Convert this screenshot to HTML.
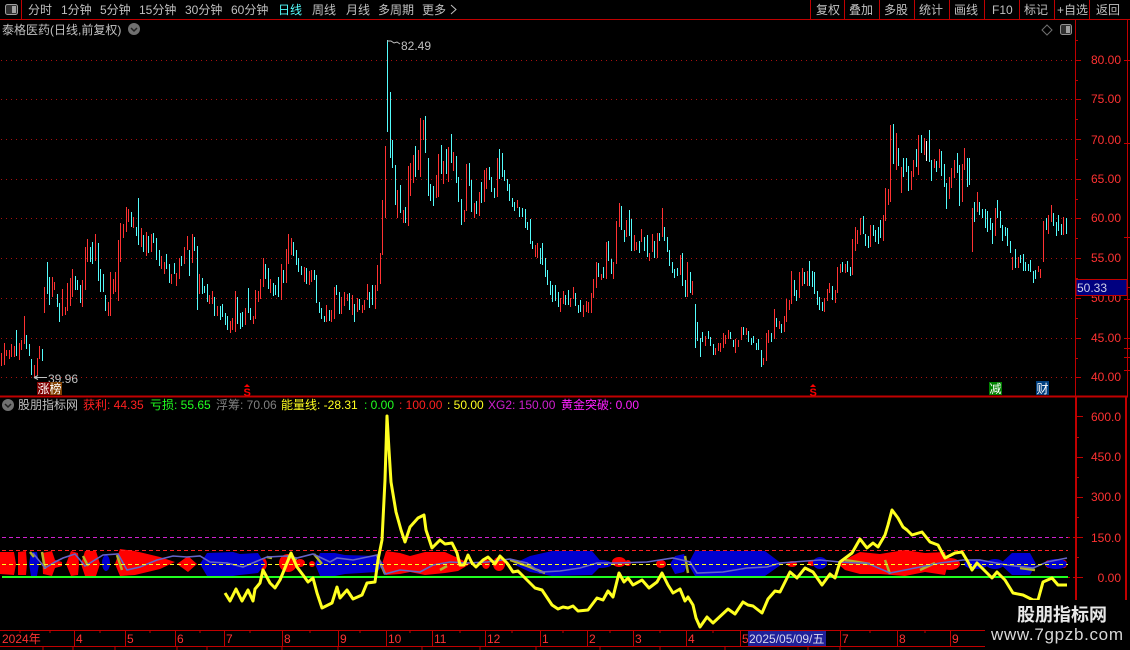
<!DOCTYPE html>
<html><head><meta charset="utf-8"><style>
html,body{margin:0;padding:0;background:#000;width:1130px;height:650px;overflow:hidden}
svg{display:block}
text{font-family:"Liberation Sans","WenQuanYi Zen Hei","Noto Sans CJK SC",sans-serif;font-size:12px;fill:#c0c0c0}
.r{fill:#ff3232}
.ax text{fill:#ff3232;text-anchor:end}
</style></head><body>
<svg width="1130" height="650" viewBox="0 0 1130 650" xmlns="http://www.w3.org/2000/svg">
<rect width="1130" height="650" fill="#000"/>
<!-- grid -->
<g stroke="#a81010" stroke-dasharray="1 4" shape-rendering="crispEdges">
<path d="M1 60.5H1075M1 99.5H1075M1 139.5H1075M1 179.5H1075M1 218.5H1075M1 258.5H1075M1 298.5H1075M1 338.5H1075M1 377.5H1075"/>
</g>
<!-- candles -->
<g transform="translate(.5,0)" fill="none" stroke-width="1" shape-rendering="crispEdges">
<path stroke="#ff3232" d="M1 353V366M4 343V365M6 350V356M9 350V359M11 344V357M14 346V357M19 343V360M21 340V350M24 316V344M34 365V378M37 358V375M39 346V359M44 287V313M52 277V297M54 282V290M62 289V316M65 307V315M67 283V311M70 278V306M72 269V297M82 280V307M85 247V290M87 239V262M95 234V261M108 302V316M110 272V316M113 279V294M115 272V292M118 240V301M120 223V262M123 224V238M126 207V232M128 209V222M133 217V228M141 228V247M146 232V256M151 234V252M161 256V269M164 262V274M171 274V284M176 273V286M179 258V279M184 247V264M187 236V250M192 234V263M199 274V294M209 295V304M212 291V304M217 306V316M230 321V333M232 318V330M235 291V332M245 308V325M253 316V324M255 290V319M258 291V302M260 279V299M263 258V287M270 279V293M281 264V300M286 249V283M288 234V264M291 238V255M304 267V282M309 271V285M311 270V282M326 305V322M331 310V322M334 287V319M341 297V314M344 292V306M347 294V301M352 295V315M357 298V312M362 305V313M364 300V310M367 284V300M375 285V309M377 265V291M380 253V284M382 200V255M385 146V218M397 190V218M403 210V223M408 166V226M410 163V196M413 155V183M418 150V170M420 118V177M423 120V140M436 175V198M438 154V197M443 161V184M448 147V182M453 152V171M464 210V222M466 164V211M474 203V218M479 192V216M484 170V202M486 168V189M497 158V197M517 200V208M535 245V257M537 243V258M560 298V312M563 291V304M570 298V307M573 287V299M583 305V317M586 301V312M588 302V313M591 293V313M593 279V298M596 262V288M601 274V280M606 242V279M613 262V279M616 221V264M619 203V227M626 220V237M634 235V251M636 242V250M641 229V242M649 253V261M652 234V252M657 233V258M662 208V237M680 255V275M687 262V297M692 281V295M705 336V346M715 348V355M718 343V351M720 343V352M723 333V348M725 335V344M728 330V339M735 339V353M738 340V347M741 327V340M746 328V335M763 358V365M766 333V361M768 330V343M774 309V339M779 321V329M784 316V332M786 299V322M789 300V310M791 271V304M799 272V298M802 268V286M807 271V286M824 298V312M827 289V301M829 283V293M835 290V303M837 267V293M840 264V273M845 264V273M852 239V275M855 227V251M857 230V244M860 218V235M870 225V247M883 215V241M885 188V221M888 189V205M890 125V202M896 133V170M901 167V193M911 171V190M913 160V177M918 135V175M924 138V155M934 159V168M939 149V168M949 177V199M951 168V188M954 160V178M962 164V202M964 148V170M972 208V252M977 192V212M995 208V236M1012 257V270M1018 257V268M1038 266V272M1040 269V278M1043 221V262M1048 215V234M1051 205V222M1063 217V235"/>
<path stroke="#54fcfc" d="M16 330V356M26 335V349M29 344V356M31 359V375M42 349V361M47 262V294M49 277V305M57 294V307M59 303V322M75 276V290M77 280V290M80 285V303M90 247V262M92 242V264M98 243V281M100 269V292M103 274V292M105 295V311M131 212V227M136 227V236M138 198V245M143 235V252M148 236V253M153 233V243M156 238V260M159 250V266M166 254V269M169 264V283M174 263V274M181 256V266M189 250V276M194 237V251M197 246V310M202 278V294M204 286V293M207 284V302M214 297V316M220 306V320M222 304V317M225 313V325M227 316V330M237 297V324M240 313V329M242 312V327M248 288V313M250 308V320M265 264V279M268 268V289M273 283V296M275 285V295M278 277V297M283 270V283M293 242V256M296 250V265M298 258V272M301 266V275M306 268V284M314 270V280M316 275V303M319 302V313M321 308V319M324 316V322M329 310V321M336 285V295M339 292V314M349 293V310M354 304V322M359 299V310M369 292V308M372 285V305M387 40V132M390 92V158M392 140V168M395 165V205M400 185V213M405 207V223M415 146V177M425 116V153M428 158V196M430 184V201M433 186V206M441 145V174M446 149V174M451 134V163M456 156V183M458 177V202M461 199V225M469 163V186M471 180V212M476 201V214M481 182V203M489 167V180M491 177V192M494 188V198M499 149V179M502 153V177M504 170V181M507 179V191M509 184V201M512 198V207M514 202V211M519 207V217M522 208V217M525 209V228M527 222V230M530 219V244M532 241V249M540 248V264M542 243V265M545 258V277M547 270V285M550 281V295M552 285V302M555 285V301M558 292V307M565 295V305M568 290V305M575 293V306M578 305V313M580 300V312M598 263V277M603 267V278M608 241V261M611 259V274M621 206V230M624 230V242M629 210V236M631 219V251M639 241V253M644 237V251M647 235V257M654 241V258M659 233V241M664 227V241M667 237V252M669 250V266M672 262V273M674 269V278M677 268V276M682 253V286M685 280V297M690 272V293M695 304V348M697 322V341M700 338V357M702 332V342M708 331V339M710 337V346M713 344V355M730 332V339M733 340V347M743 327V335M748 331V342M751 338V345M753 336V343M756 343V350M758 339V350M761 350V367M771 333V342M776 318V327M781 324V333M794 280V296M796 290V301M804 272V284M809 261V286M812 271V287M814 272V294M817 291V305M819 297V310M822 302V311M832 286V300M842 262V272M847 261V272M850 267V276M863 216V234M865 234V246M868 236V248M873 225V236M875 230V242M878 227V244M880 220V238M893 124V164M898 148V166M903 158V177M906 158V172M908 166V191M916 149V167M921 135V153M929 130V162M931 160V181M936 161V172M941 151V176M944 164V187M946 183V209M957 153V173M959 165V206M967 158V187M969 158V185M974 202V222M979 202V215M982 209V218M985 209V228M987 211V232M990 218V230M992 223V244M997 200V218M1000 211V228M1002 225V241M1005 227V236M1007 228V246M1010 241V253M1015 249V268M1020 255V263M1023 254V271M1025 262V271M1028 264V271M1030 260V272M1033 271V283M1035 270V279M1046 218V230M1053 213V226M1056 222V236M1058 215V231M1061 224V235M1066 218V234"/>
<path stroke="#ffffff" d="M926 141V161"/>
</g>
<!-- high/low marks -->
<path d="M387 41h4l3 2 3-1 3 2" fill="none" stroke="#c0c0c0"/>
<text x="401" y="50">82.49</text>
<path d="M34 377.5H47M34 377.5l4-2M34 377.5l4 2" fill="none" stroke="#c0c0c0"/>
<text x="48" y="383">39.96</text>
<!-- markers -->
<rect x="37" y="382" width="13" height="13" fill="#800000"/><rect x="50" y="382" width="12" height="13" fill="#804000"/>
<text x="37.5" y="393" style="fill:#fff;font-size:12px">涨榜</text>
<path d="M247 384l-3 3h6z" fill="#ff0000"/><text x="243.5" y="396" style="fill:#ff0000;font-size:11px;font-weight:bold">S</text>
<path d="M813 384l-3 3h6z" fill="#ff0000"/><text x="809.5" y="396" style="fill:#ff0000;font-size:11px;font-weight:bold">S</text>
<rect x="989" y="382" width="13" height="13" fill="#008000"/><text x="989.5" y="393" style="fill:#fff">减</text>
<rect x="1036" y="381" width="13" height="14" fill="#004080"/><text x="1036.5" y="393" style="fill:#fff">财</text>

<!-- indicator blobs -->
<g fill="#ff0000">
<path d="M0 552L14 552L16 564L14 575L0 574ZM18 552L26 551L27 564L26 575L18 575ZM42 553L52 551L55 560L62 562L62 566L55 568L52 576L43 574ZM66 564L71 551L78 553L79 564L78 575L71 576ZM81 564L85 551L96 551L100 564L96 576L85 576ZM115 564L120 549L135 551L160 557L175 562L160 569L135 575L120 576ZM177 564L188 556L197 564L188 572ZM382 564L386 551L400 553L410 556L425 552L445 552L458 558L470 564L458 571L445 573L425 575L410 572L400 574L386 575ZM838 564L852 556L860 552L880 554L905 550L925 553L945 552L948 564L945 575L925 572L905 576L880 574L860 574L845 570Z"/>
<ellipse cx="263" cy="564" rx="4" ry="6"/><ellipse cx="288" cy="563" rx="9" ry="9"/><ellipse cx="300" cy="563" rx="5" ry="4"/><ellipse cx="312" cy="564" rx="3" ry="3"/><ellipse cx="486" cy="564" rx="4" ry="5"/><ellipse cx="499" cy="564" rx="6" ry="7"/><ellipse cx="619" cy="562" rx="7" ry="5"/><ellipse cx="628" cy="563" rx="3" ry="3"/><ellipse cx="661" cy="564" rx="5" ry="4"/><ellipse cx="792" cy="564" rx="5" ry="3"/><ellipse cx="812" cy="563" rx="4" ry="3"/><ellipse cx="950" cy="564" rx="10" ry="6"/><ellipse cx="1049" cy="564" rx="4" ry="4"/><ellipse cx="1064" cy="564" rx="3" ry="4"/>
</g>
<g fill="#0000d0">
<path d="M29 564L31 552L37 552L39 564L37 576L31 576ZM200 564L207 553L233 552L240 554L258 553L265 564L258 573L240 575L233 576L207 576ZM315 564L320 553L335 553L345 555L377 556L384 564L377 572L345 574L335 576L320 576ZM513 564L530 556L552 551L592 551L603 564L592 575L552 576L530 572ZM670 564L675 556L684 554L688 564L684 572L675 574ZM688 564L695 551L765 551L782 564L765 576L695 576ZM1000 564L1012 553L1030 553L1036 564L1030 575L1012 575Z"/>
<ellipse cx="106" cy="563" rx="4" ry="8"/><ellipse cx="600" cy="564" rx="12" ry="4"/><ellipse cx="820" cy="563" rx="7" ry="6"/><ellipse cx="976" cy="564" rx="12" ry="5"/><ellipse cx="995" cy="564" rx="9" ry="5"/><ellipse cx="1056" cy="564" rx="11" ry="5"/>
</g>
<path fill="none" stroke="#b4b428" stroke-width="2.5" d="M30 552L34 557M42 552L45 569M83 556L88 566M117 555L122 570M267 557L272 558M287 556L297 559M314 554L322 564M377 555L385 574M440 570L447 566M510 560L527 566L545 573M685 556L688 573M845 560L870 564M885 560L890 574M920 570L935 563M1020 568L1035 570"/>
<polyline fill="none" stroke="#6464c8" stroke-width="1.600" points="33,553 45,568 55,562 63,558 75,554 85,566 103,555 118,554 127,570 140,567 157,560 173,556 187,557 200,556 210,562 227,563 243,567 267,557 287,556 297,558 313,554 330,562 337,558 353,560 377,555 385,574 400,570 420,572 433,565 450,562 467,563 487,562 510,559 527,563 540,572 560,571 580,568 597,563 617,563 647,562 673,558 690,562 697,573 723,572 747,568 767,567 780,563 820,560 840,562 857,563 867,563 890,573 920,567 940,563 963,560 980,560 1007,565 1033,568 1047,562 1067,558"/>
<!-- indicator levels -->
<g shape-rendering="crispEdges" fill="none">
<path d="M2 537.5H1068" stroke="#d020d0" stroke-dasharray="4 3"/>
<path d="M2 550.5H1068" stroke="#ff2020" stroke-dasharray="4 3"/>
<path d="M2 564.5H1068" stroke="#ffff20" stroke-dasharray="4 3"/>
<path d="M2 577H1068" stroke="#20ff20" stroke-width="2"/>
</g>
<polyline fill="none" stroke="#ffff20" stroke-width="3" stroke-linejoin="round" points="225,593 230,601 236,589 242,601 248,590 253,601 255,589 260,583 263,570 270,583 275,588 280,580 287,563 291,553 297,567 303,575 308,582 313,578 317,593 322,608 332,603 337,587 340,598 347,590 353,599 362,595 367,583 375,582 378,560 382,540 385,480 387,416 389,450 391,482 396,512 401,530 405,542 410,527 418,518 424,515 426,530 432,548 440,540 445,544 452,543 457,553 460,565 464,565 468,555 472,563 476,567 483,560 488,557 495,564 500,556 507,563 513,572 518,571 527,580 535,588 542,590 552,605 558,609 563,607 568,608 573,606 578,611 588,610 597,598 603,600 608,591 613,597 619,573 624,582 628,578 633,585 642,580 649,588 657,582 662,573 668,585 673,593 680,589 685,601 688,597 693,605 696,618 700,627 707,617 713,623 728,609 735,614 743,602 748,605 753,606 762,613 768,599 775,591 780,592 790,572 797,578 805,568 813,572 822,585 830,574 835,578 840,562 852,553 860,539 867,548 873,543 878,547 885,535 888,525 892,510 898,518 903,527 907,530 912,535 922,532 930,542 938,545 945,558 955,553 962,552 968,562 972,570 977,563 992,578 997,572 1005,580 1013,593 1023,595 1033,600 1038,600 1043,582 1052,578 1058,585 1067,585"/>

<!-- frames -->
<g fill="none" stroke="#c00000" shape-rendering="crispEdges">
<path d="M0 19.5H1130"/>
<path d="M21.5 0V19M810.5 0V19M844.5 0V19M879.5 0V19M914.5 0V19M949.5 0V19M984.5 0V19M1019.5 0V19M1054.5 0V19M1089.5 0V19"/>
<path d="M1075.5 20V396M1127.5 20V396"/>
<path d="M0 396.5H1128" stroke-width="2"/>
<path d="M1076 396V650" stroke-width="2"/>
<path d="M1126 396V650" stroke-width="2"/>
<path d="M1075 60.5h6M1075 99.5h6M1075 139.5h6M1075 179.5h6M1075 218.5h6M1075 258.5h6M1075 298.5h6M1075 338.5h6M1075 377.5h6"/>
<path d="M1075 40.5h3M1075 80.5h3M1075 119.5h3M1075 159.5h3M1075 199.5h3M1075 238.5h3M1075 278.5h3M1075 318.5h3M1075 358.5h3"/>
<path d="M1124 60.5h6M1124 143.5h6M1124 237.5h6M1124 287.5h6M1124 299.5h6M1124 338.5h6M1124 348.5h6M1124 357.5h6M1124 370.5h6"/>
<path d="M1076 416.5h7M1076 437.5h3M1076 457.5h7M1076 477.5h3M1076 497.5h7M1076 517.5h3M1076 537.5h7M1076 557.5h3M1076 577.5h7"/>
<path d="M1068 537.5h8M1068 577.5h8" stroke-dasharray="2 3"/>
<!-- x axis -->
<path d="M0 630.5H1076M0 646.5H1076"/>
<path d="M74.5 630V646M125.5 630V646M175.5 630V646M224.5 630V646M282.5 630V646M338.5 630V646M386.5 630V646M432.5 630V646M485.5 630V646M540.5 630V646M587.5 630V646M633.5 630V646M686.5 630V646M740.5 630V646M840.5 630V646M897.5 630V646M950.5 630V646"/>
<path d="M20 630v3M50 630v3M100 630v3M150 630v3M200 630v3M250 630v3M310 630v3M360 630v3M410 630v3M460 630v3M512 630v3M563 630v3M610 630v3M660 630v3M713 630v3M870 630v3M925 630v3M810 630v3"/>
<path d="M43 646v4M73 646v4M115 646v4M177 646v4M207 646v4M282 646v4M338 646v4M422 646v4M480 646v4M536 646v4M600 646v4M660 646v4M725 646v4M808 646v4M840 646v4"/>
</g>
<!-- y labels -->
<g class="ax">
<text x="1121" y="64">80.00</text><text x="1121" y="103">75.00</text><text x="1121" y="144">70.00</text><text x="1121" y="183">65.00</text><text x="1121" y="222">60.00</text><text x="1121" y="262">55.00</text><text x="1121" y="302">50.00</text><text x="1121" y="342">45.00</text><text x="1121" y="381">40.00</text>
<text x="1121" y="421">600.0</text><text x="1121" y="461">450.0</text><text x="1121" y="501">300.0</text><text x="1121" y="542">150.0</text><text x="1121" y="582">0.00</text>
</g>
<rect x="1076" y="279.5" width="51" height="16" fill="#000080" stroke="#c00000" shape-rendering="crispEdges"/>
<text x="1077" y="292" style="fill:#d0d0e8">50.33</text>
<!-- x labels -->
<g class="xt">
<text class="r" x="2" y="643">2024年</text><text class="r" x="76" y="643">4</text><text class="r" x="127" y="643">5</text><text class="r" x="177" y="643">6</text><text class="r" x="226" y="643">7</text><text class="r" x="284" y="643">8</text><text class="r" x="340" y="643">9</text><text class="r" x="388" y="643">10</text><text class="r" x="434" y="643">11</text><text class="r" x="487" y="643">12</text><text class="r" x="542" y="643">1</text><text class="r" x="589" y="643">2</text><text class="r" x="635" y="643">3</text><text class="r" x="688" y="643">4</text><text class="r" x="742" y="643">5</text><text class="r" x="842" y="643">7</text><text class="r" x="899" y="643">8</text><text class="r" x="952" y="643">9</text>
</g>
<rect x="748" y="631" width="78" height="15" fill="#202098"/>
<text x="749" y="643" style="fill:#d8d8f0">2025/05/09/五</text>

<!-- toolbar -->
<rect x="5.500" y="4.500" width="12" height="10" rx="2" fill="#303030" stroke="#a0a0a0"/><rect x="12" y="6" width="4" height="7" fill="#a0a0a0"/>
<g>
<text x="28" y="14">分时</text><text x="61" y="14">1分钟</text><text x="100" y="14">5分钟</text><text x="139" y="14">15分钟</text><text x="185" y="14">30分钟</text><text x="231" y="14">60分钟</text><text x="278" y="14" style="fill:#54fcfc">日线</text><text x="312" y="14">周线</text><text x="346" y="14">月线</text><text x="378" y="14">多周期</text><text x="422" y="14">更多</text>
<path d="M451 5l5 4.500-5 4.500" fill="none" stroke="#c0c0c0"/>
<text x="816" y="14">复权</text><text x="849" y="14">叠加</text><text x="884" y="14">多股</text><text x="919" y="14">统计</text><text x="954" y="14">画线</text><text x="992" y="14">F10</text><text x="1024" y="14">标记</text><text x="1057" y="14">+自选</text><text x="1096" y="14">返回</text>
</g>
<!-- title -->
<text x="2" y="34">泰格医药(日线,前复权)</text>
<circle cx="134" cy="29" r="6" fill="#707070"/><path d="M131 28l3 3 3-3" fill="none" stroke="#202020" stroke-width="1.500"/>
<path d="M1047 25l5 5-5 5-5-5z" fill="none" stroke="#707070"/>
<rect x="1060.500" y="24.500" width="11" height="10" rx="2" fill="#303030" stroke="#909090"/><rect x="1066" y="26" width="4" height="7" fill="#a0a0a0"/>
<!-- indicator legend -->
<circle cx="8" cy="405" r="6" fill="#707070"/><path d="M5 404l3 3 3-3" fill="none" stroke="#202020" stroke-width="1.500"/>
<text x="18" y="409">股朋指标网</text>
<text x="83" y="409" style="fill:#ff2020">获利: 44.35</text>
<text x="150" y="409" style="fill:#20ff20">亏损: 55.65</text>
<text x="216" y="409" style="fill:#808080">浮筹: 70.06</text>
<text x="281" y="409" style="fill:#ffff20">能量线: -28.31</text>
<text x="364" y="409" style="fill:#20ff20">: 0.00</text>
<text x="399" y="409" style="fill:#ff2020">: 100.00</text>
<text x="447" y="409" style="fill:#ffff20">: 50.00</text>
<text x="488" y="409" style="fill:#d020d0">XG2: 150.00</text>
<text x="561" y="409" style="fill:#ff20ff">黄金突破: 0.00</text>
<!-- watermark -->
<rect x="985" y="600" width="145" height="50" fill="#000"/>
<rect x="1075" y="590" width="2" height="10" fill="#c00000"/><rect x="1125" y="590" width="2" height="10" fill="#c00000"/>
<text x="1017" y="621" style="fill:#e8e8e8;font-size:18px;font-weight:bold">股朋指标网</text>
<text x="991" y="640" textLength="132" style="fill:#d8d8d8;font-size:17px">www.7gpzb.com</text>
</svg>
</body></html>
